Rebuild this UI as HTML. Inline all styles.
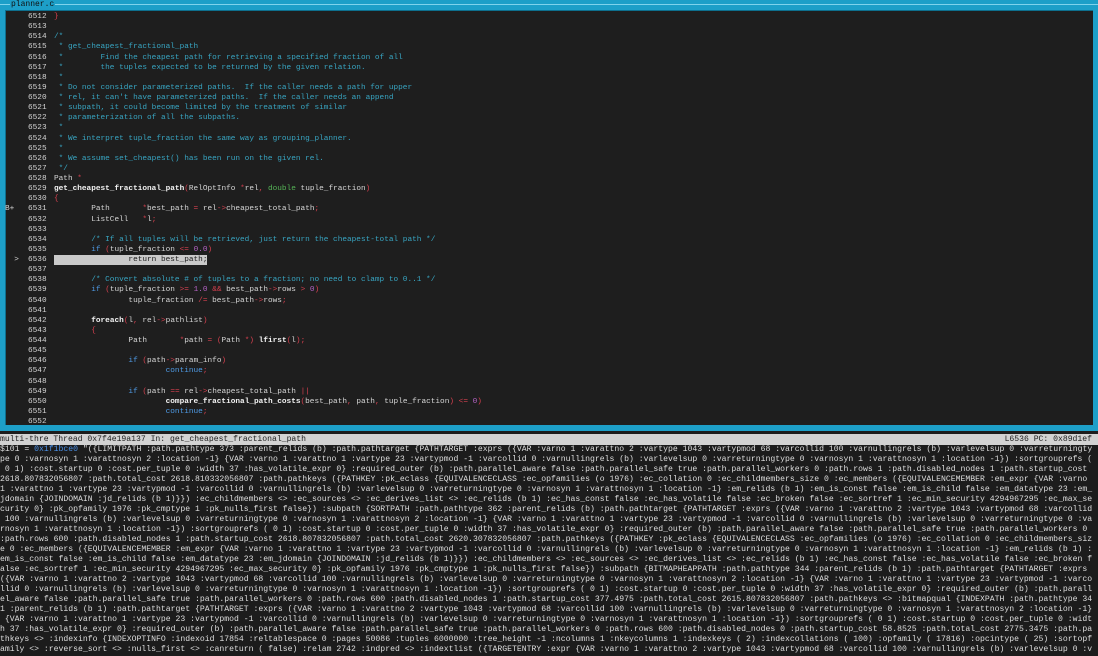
<!DOCTYPE html>
<html><head><meta charset="utf-8">
<style>
html,body{margin:0;padding:0;}
body{width:1098px;height:656px;background:#1c1c1c;overflow:hidden;position:relative;font-family:"Liberation Mono",monospace;}
.box{position:absolute;left:0;top:0;width:1098px;height:431px;background:#1d9fc8;}
.hl1{position:absolute;left:0;top:4px;width:1098px;height:1px;background:#7fd3ec;}
.inner{position:absolute;left:5px;top:10px;width:1087px;height:414px;background:#1e1e1e;border-left:1px solid #0d6f8e;border-top:1px solid #0d6f8e;}
.title{position:absolute;left:10px;top:0px;font-size:8px;line-height:10px;color:#111;background:#1d9fc8;padding:0 1px;}
.src{position:absolute;left:0;top:12px;width:1090px;font-size:7.75px;line-height:10.125px;color:#d6d6d6;}
.row{position:relative;height:10.125px;}
.row span{white-space:pre;}
.ln{position:absolute;left:28px;}
.mk{position:absolute;left:5px;}
.cd{position:absolute;left:54px;}
.c{color:#38a5c2}.k{color:#4f9be6}.t{color:#55b356}.p{color:#d6404f}.n{color:#b463c4}.b{color:#f2f2f2;font-weight:bold}
.cur{background:#c9c9c9;color:#1a1a1a;}
.status{position:absolute;left:0;top:434px;width:1098px;height:11px;background:#d2d2d2;color:#1e1e1e;font-size:8.1px;line-height:11px;white-space:pre;}
.status .r{position:absolute;right:6px;top:0;}
.out{position:absolute;left:0;top:445px;font-size:8.13px;line-height:10px;color:#dedede;white-space:pre;}
.bl{color:#4a8fe6}
</style></head><body>
<div class="box"><div class="hl1"></div><div class="inner"></div><div class="title">planner.c</div></div>
<div class="src"><div class="row"><span class="ln">6512</span><span class="cd"><span class="p">}</span></span></div><div class="row"><span class="ln">6513</span></div><div class="row"><span class="ln">6514</span><span class="cd c">/*</span></div><div class="row"><span class="ln">6515</span><span class="cd c"> * get_cheapest_fractional_path</span></div><div class="row"><span class="ln">6516</span><span class="cd c"> *        Find the cheapest path for retrieving a specified fraction of all</span></div><div class="row"><span class="ln">6517</span><span class="cd c"> *        the tuples expected to be returned by the given relation.</span></div><div class="row"><span class="ln">6518</span><span class="cd c"> *</span></div><div class="row"><span class="ln">6519</span><span class="cd c"> * Do not consider parameterized paths.  If the caller needs a path for upper</span></div><div class="row"><span class="ln">6520</span><span class="cd c"> * rel, it can't have parameterized paths.  If the caller needs an append</span></div><div class="row"><span class="ln">6521</span><span class="cd c"> * subpath, it could become limited by the treatment of similar</span></div><div class="row"><span class="ln">6522</span><span class="cd c"> * parameterization of all the subpaths.</span></div><div class="row"><span class="ln">6523</span><span class="cd c"> *</span></div><div class="row"><span class="ln">6524</span><span class="cd c"> * We interpret tuple_fraction the same way as grouping_planner.</span></div><div class="row"><span class="ln">6525</span><span class="cd c"> *</span></div><div class="row"><span class="ln">6526</span><span class="cd c"> * We assume set_cheapest() has been run on the given rel.</span></div><div class="row"><span class="ln">6527</span><span class="cd c"> */</span></div><div class="row"><span class="ln">6528</span><span class="cd">Path <span class="p">*</span></span></div><div class="row"><span class="ln">6529</span><span class="cd"><span class="b">get_cheapest_fractional_path</span><span class="p">(</span>RelOptInfo <span class="p">*</span>rel<span class="p">,</span> <span class="t">double</span> tuple_fraction<span class="p">)</span></span></div><div class="row"><span class="ln">6530</span><span class="cd"><span class="p">{</span></span></div><div class="row"><span class="mk">B+</span><span class="ln">6531</span><span class="cd">        Path       <span class="p">*</span>best_path <span class="p">=</span> rel<span class="p">-&gt;</span>cheapest_total_path<span class="p">;</span></span></div><div class="row"><span class="ln">6532</span><span class="cd">        ListCell   <span class="p">*</span>l<span class="p">;</span></span></div><div class="row"><span class="ln">6533</span></div><div class="row"><span class="ln">6534</span><span class="cd c">        /* If all tuples will be retrieved, just return the cheapest-total path */</span></div><div class="row"><span class="ln">6535</span><span class="cd">        <span class="k">if</span> <span class="p">(</span>tuple_fraction <span class="p">&lt;=</span> <span class="n">0.0</span><span class="p">)</span></span></div><div class="row"><span class="mk">  &gt;</span><span class="ln">6536</span><span class="cd cur">                return best_path;</span></div><div class="row"><span class="ln">6537</span></div><div class="row"><span class="ln">6538</span><span class="cd c">        /* Convert absolute # of tuples to a fraction; no need to clamp to 0..1 */</span></div><div class="row"><span class="ln">6539</span><span class="cd">        <span class="k">if</span> <span class="p">(</span>tuple_fraction <span class="p">&gt;=</span> <span class="n">1.0</span> <span class="p">&amp;&amp;</span> best_path<span class="p">-&gt;</span>rows <span class="p">&gt;</span> <span class="n">0</span><span class="p">)</span></span></div><div class="row"><span class="ln">6540</span><span class="cd">                tuple_fraction <span class="p">/=</span> best_path<span class="p">-&gt;</span>rows<span class="p">;</span></span></div><div class="row"><span class="ln">6541</span></div><div class="row"><span class="ln">6542</span><span class="cd">        <span class="b">foreach</span><span class="p">(</span>l<span class="p">,</span> rel<span class="p">-&gt;</span>pathlist<span class="p">)</span></span></div><div class="row"><span class="ln">6543</span><span class="cd">        <span class="p">{</span></span></div><div class="row"><span class="ln">6544</span><span class="cd">                Path       <span class="p">*</span>path <span class="p">=</span> <span class="p">(</span>Path <span class="p">*)</span> <span class="b">lfirst</span><span class="p">(</span>l<span class="p">);</span></span></div><div class="row"><span class="ln">6545</span></div><div class="row"><span class="ln">6546</span><span class="cd">                <span class="k">if</span> <span class="p">(</span>path<span class="p">-&gt;</span>param_info<span class="p">)</span></span></div><div class="row"><span class="ln">6547</span><span class="cd">                        <span class="k">continue</span><span class="p">;</span></span></div><div class="row"><span class="ln">6548</span></div><div class="row"><span class="ln">6549</span><span class="cd">                <span class="k">if</span> <span class="p">(</span>path <span class="p">==</span> rel<span class="p">-&gt;</span>cheapest_total_path <span class="p">||</span></span></div><div class="row"><span class="ln">6550</span><span class="cd">                        <span class="b">compare_fractional_path_costs</span><span class="p">(</span>best_path<span class="p">,</span> path<span class="p">,</span> tuple_fraction<span class="p">)</span> <span class="p">&lt;=</span> <span class="n">0</span><span class="p">)</span></span></div><div class="row"><span class="ln">6551</span><span class="cd">                        <span class="k">continue</span><span class="p">;</span></span></div><div class="row"><span class="ln">6552</span></div></div>
<div class="status">multi-thre Thread 0x7f4e19a137 In: get_cheapest_fractional_path<span class="r">L6536 PC: 0x89d1ef</span></div>
<div class="out">$101 = <span class="bl">0x1f1bce0</span> "({LIMITPATH :path.pathtype 373 :parent_relids (b) :path.pathtarget {PATHTARGET :exprs ({VAR :varno 1 :varattno 2 :vartype 1043 :vartypmod 68 :varcollid 100 :varnullingrels (b) :varlevelsup 0 :varreturningty
pe 0 :varnosyn 1 :varattnosyn 2 :location -1} {VAR :varno 1 :varattno 1 :vartype 23 :vartypmod -1 :varcollid 0 :varnullingrels (b) :varlevelsup 0 :varreturningtype 0 :varnosyn 1 :varattnosyn 1 :location -1}) :sortgrouprefs (
 0 1) :cost.startup 0 :cost.per_tuple 0 :width 37 :has_volatile_expr 0} :required_outer (b) :path.parallel_aware false :path.parallel_safe true :path.parallel_workers 0 :path.rows 1 :path.disabled_nodes 1 :path.startup_cost
2618.807832056807 :path.total_cost 2618.810332056807 :path.pathkeys ({PATHKEY :pk_eclass {EQUIVALENCECLASS :ec_opfamilies (o 1976) :ec_collation 0 :ec_childmembers_size 0 :ec_members ({EQUIVALENCEMEMBER :em_expr {VAR :varno
1 :varattno 1 :vartype 23 :vartypmod -1 :varcollid 0 :varnullingrels (b) :varlevelsup 0 :varreturningtype 0 :varnosyn 1 :varattnosyn 1 :location -1} :em_relids (b 1) :em_is_const false :em_is_child false :em_datatype 23 :em_
jdomain {JOINDOMAIN :jd_relids (b 1)}}) :ec_childmembers &lt;&gt; :ec_sources &lt;&gt; :ec_derives_list &lt;&gt; :ec_relids (b 1) :ec_has_const false :ec_has_volatile false :ec_broken false :ec_sortref 1 :ec_min_security 4294967295 :ec_max_se
curity 0} :pk_opfamily 1976 :pk_cmptype 1 :pk_nulls_first false}) :subpath {SORTPATH :path.pathtype 362 :parent_relids (b) :path.pathtarget {PATHTARGET :exprs ({VAR :varno 1 :varattno 2 :vartype 1043 :vartypmod 68 :varcollid
 100 :varnullingrels (b) :varlevelsup 0 :varreturningtype 0 :varnosyn 1 :varattnosyn 2 :location -1} {VAR :varno 1 :varattno 1 :vartype 23 :vartypmod -1 :varcollid 0 :varnullingrels (b) :varlevelsup 0 :varreturningtype 0 :va
rnosyn 1 :varattnosyn 1 :location -1}) :sortgrouprefs ( 0 1) :cost.startup 0 :cost.per_tuple 0 :width 37 :has_volatile_expr 0} :required_outer (b) :path.parallel_aware false :path.parallel_safe true :path.parallel_workers 0
:path.rows 600 :path.disabled_nodes 1 :path.startup_cost 2618.807832056807 :path.total_cost 2620.307832056807 :path.pathkeys ({PATHKEY :pk_eclass {EQUIVALENCECLASS :ec_opfamilies (o 1976) :ec_collation 0 :ec_childmembers_siz
e 0 :ec_members ({EQUIVALENCEMEMBER :em_expr {VAR :varno 1 :varattno 1 :vartype 23 :vartypmod -1 :varcollid 0 :varnullingrels (b) :varlevelsup 0 :varreturningtype 0 :varnosyn 1 :varattnosyn 1 :location -1} :em_relids (b 1) :
em_is_const false :em_is_child false :em_datatype 23 :em_jdomain {JOINDOMAIN :jd_relids (b 1)}}) :ec_childmembers &lt;&gt; :ec_sources &lt;&gt; :ec_derives_list &lt;&gt; :ec_relids (b 1) :ec_has_const false :ec_has_volatile false :ec_broken f
alse :ec_sortref 1 :ec_min_security 4294967295 :ec_max_security 0} :pk_opfamily 1976 :pk_cmptype 1 :pk_nulls_first false}) :subpath {BITMAPHEAPPATH :path.pathtype 344 :parent_relids (b 1) :path.pathtarget {PATHTARGET :exprs
({VAR :varno 1 :varattno 2 :vartype 1043 :vartypmod 68 :varcollid 100 :varnullingrels (b) :varlevelsup 0 :varreturningtype 0 :varnosyn 1 :varattnosyn 2 :location -1} {VAR :varno 1 :varattno 1 :vartype 23 :vartypmod -1 :varco
llid 0 :varnullingrels (b) :varlevelsup 0 :varreturningtype 0 :varnosyn 1 :varattnosyn 1 :location -1}) :sortgrouprefs ( 0 1) :cost.startup 0 :cost.per_tuple 0 :width 37 :has_volatile_expr 0} :required_outer (b) :path.parall
el_aware false :path.parallel_safe true :path.parallel_workers 0 :path.rows 600 :path.disabled_nodes 1 :path.startup_cost 377.4975 :path.total_cost 2615.807832056807 :path.pathkeys &lt;&gt; :bitmapqual {INDEXPATH :path.pathtype 34
1 :parent_relids (b 1) :path.pathtarget {PATHTARGET :exprs ({VAR :varno 1 :varattno 2 :vartype 1043 :vartypmod 68 :varcollid 100 :varnullingrels (b) :varlevelsup 0 :varreturningtype 0 :varnosyn 1 :varattnosyn 2 :location -1}
 {VAR :varno 1 :varattno 1 :vartype 23 :vartypmod -1 :varcollid 0 :varnullingrels (b) :varlevelsup 0 :varreturningtype 0 :varnosyn 1 :varattnosyn 1 :location -1}) :sortgrouprefs ( 0 1) :cost.startup 0 :cost.per_tuple 0 :widt
h 37 :has_volatile_expr 0} :required_outer (b) :path.parallel_aware false :path.parallel_safe true :path.parallel_workers 0 :path.rows 600 :path.disabled_nodes 0 :path.startup_cost 58.8525 :path.total_cost 2775.3475 :path.pa
thkeys &lt;&gt; :indexinfo {INDEXOPTINFO :indexoid 17854 :reltablespace 0 :pages 50086 :tuples 6000000 :tree_height -1 :ncolumns 1 :nkeycolumns 1 :indexkeys ( 2) :indexcollations ( 100) :opfamily ( 17816) :opcintype ( 25) :sortopf
amily &lt;&gt; :reverse_sort &lt;&gt; :nulls_first &lt;&gt; :canreturn ( false) :relam 2742 :indpred &lt;&gt; :indextlist ({TARGETENTRY :expr {VAR :varno 1 :varattno 2 :vartype 1043 :vartypmod 68 :varcollid 100 :varnullingrels (b) :varlevelsup 0 :v</div>
</body></html>
